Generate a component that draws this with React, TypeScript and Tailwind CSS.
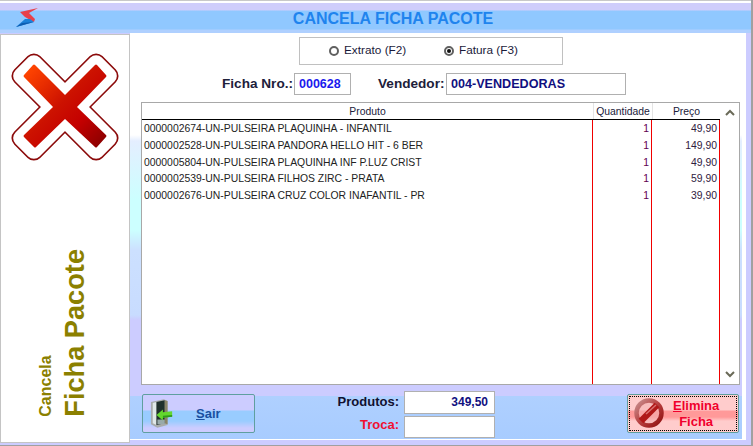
const rows = [
  { name: "0000002674-UN-PULSEIRA PLAQUINHA - INFANTIL", qty: "1", price: "49,90" },
  { name: "0000002528-UN-PULSEIRA PANDORA HELLO HIT - 6 BER", qty: "1", price: "149,90" },
  { name: "0000005804-UN-PULSEIRA PLAQUINHA INF P.LUZ CRIST", qty: "1", price: "49,90" },
  { name: "0000002539-UN-PULSEIRA FILHOS ZIRC - PRATA", qty: "1", price: "59,90" },
  { name: "0000002676-UN-PULSEIRA CRUZ COLOR INAFANTIL - PR", qty: "1", price: "39,90" },
]

function Logo() {
  return (
    <svg width="26" height="22" viewBox="0 0 26 22" className="ml-[14px] mt-[2px]">
      <polygon points="6,4 24,0 15,5 21,11 20,14 11,9" fill="#e8404a" />
      <polygon points="20,14 2,19 11,11 16,11" fill="#1a80d8" />
      <polygon points="20,14 2,19 8,15" fill="#0c5cb0" />
    </svg>
  )
}

function BigX() {
  return (
    <svg width="112" height="114" viewBox="9 50 112 114">
      <defs>
        <linearGradient id="xg" gradientUnits="userSpaceOnUse" x1="28" y1="70" x2="102" y2="144">
          <stop offset="0" stopColor="#ff4400" />
          <stop offset="0.45" stopColor="#cc1100" />
          <stop offset="0.7" stopColor="#c40000" />
          <stop offset="1" stopColor="#8c0000" />
        </linearGradient>
      </defs>
      <g transform="translate(65 107)">
        <rect x="-62.5" y="-18.5" width="125" height="37" rx="9" fill="#8b0a0a" transform="rotate(45)" />
        <rect x="-62.5" y="-18.5" width="125" height="37" rx="9" fill="#8b0a0a" transform="rotate(-45)" />
        <rect x="-61" y="-17" width="122" height="34" rx="8" fill="#fff" transform="rotate(45)" />
        <rect x="-61" y="-17" width="122" height="34" rx="8" fill="#fff" transform="rotate(-45)" />
      </g>
      <path
        d="M35 65 L65 95 L95 65 Q96 64 97 65 L106 75 Q107 76 106 77 L77 107 L106 135 Q107 136 106 137 L97 147 Q96 148 95 147 L65 119 L36 147 Q35 148 34 147 L24 137 Q23 136 24 135 L53 107 L24 77 Q23 76 24 75 L33 65 Q34 64 35 65 Z"
        fill="url(#xg)"
      />
    </svg>
  )
}

function DoorIcon() {
  return (
    <svg width="24" height="32" viewBox="0 0 26 32">
      <polygon points="1,3 15,0 19,2 19,28 8,31 1,27" fill="#a8acac" />
      <polygon points="3,4 7,3 7,28 3,26" fill="#dfe8e8" />
      <polygon points="7,3 16,1 16,26 7,28" fill="#20302c" />
      <polygon points="16,1 19,2 19,27 16,26" fill="#8a8468" />
      <rect x="8" y="22" width="8" height="5" fill="#9aa" />
      <polygon points="7,17 14,11 14,14 24,13 24,19 14,20 14,23" fill="#63d82e" />
      <polygon points="14,20 24,19 24,17 14,18" fill="#2f9a1c" />
    </svg>
  )
}

function NoIcon() {
  return (
    <svg width="30" height="30" viewBox="0 0 30 30" className="mb-[2px]">
      <defs>
        <linearGradient id="ng" x1="0" y1="0" x2="1" y2="1">
          <stop offset="0" stopColor="#c89090" />
          <stop offset="0.5" stopColor="#b84040" />
          <stop offset="1" stopColor="#901010" />
        </linearGradient>
      </defs>
      <circle cx="15" cy="15" r="12.5" fill="#f2b0b0" fillOpacity="0.55" stroke="url(#ng)" strokeWidth="4.5" />
      <line x1="7" y1="23" x2="23" y2="7" stroke="#b01818" strokeWidth="6.5" />
      <line x1="12" y1="16" x2="22" y2="7" stroke="#d87070" strokeWidth="1.5" />
    </svg>
  )
}

function Radio({ checked, label }: { checked?: boolean; label: string }) {
  return (
    <div className="flex items-center gap-[5px]">
      <span className="flex h-[10px] w-[10px] items-center justify-center rounded-full border-2 border-[#606060] bg-white">
        {checked && <span className="h-[4px] w-[4px] rounded-full bg-[#111]" />}
      </span>
      <span className="text-[11.8px] text-[#1a1a3a]">{label}</span>
    </div>
  )
}

export default function App() {
  return (
    <div className="flex h-[446px] w-[753px] flex-col overflow-hidden border-r-2 border-b border-[#a0a0a0] bg-[#ccccff] font-['Liberation_Sans',Arial,sans-serif]">
      <div className="h-[3px] shrink-0 border-t border-[#c8c8c8] bg-white" />
      <div className="relative flex h-[30px] shrink-0 items-center bg-[linear-gradient(#cfcdfb_0,#cfcdfb_7px,#90c8ff_8px,#90c8ff_26px,#afd0ff_27px)]">
        <Logo />
        <div className="absolute inset-x-0 top-[7px] pl-[35px] text-center text-[16px] leading-[18px] font-bold text-[#1f84ee]">
          CANCELA FICHA PACOTE
        </div>
      </div>
      <div className="flex min-h-0 flex-1">
        <div className="mt-[1px] mb-[2px] flex w-[130px] shrink-0 flex-col border border-[#c4c4c4] bg-white">
          <div className="ml-[8px] mt-[15px]">
            <BigX />
          </div>
          <div className="mt-auto mb-[25px] ml-[36px] flex rotate-180 flex-col items-start gap-[5px] self-start font-bold text-[#8b8000] [writing-mode:vertical-rl]">
            <span className="w-[18px] text-[16px] leading-[18px]">Cancela</span>
            <span className="w-[30px] text-[27.2px] leading-[30px] whitespace-nowrap">Ficha Pacote</span>
          </div>
        </div>
        <div className="mb-[5px] flex w-[616px] shrink-0 border-b border-white">
          <main className="flex h-[406px] w-[612px] flex-col bg-[linear-gradient(#fff_0,#fff_102px,#e4eeff_108px,#ccffff_167px,#ccffff_197px,#cce0ff_217px,#c8dcff_282px,#ccccff_287px,#ccccff_363px,#afd0ff_363px,#a8ccff_406px)]">
            <div className="ml-[169px] mt-[4px] flex h-[28px] w-[264px] items-center border border-[#c0c0c0] bg-white pl-[29px]">
              <div className="w-[115px]">
                <Radio label="Extrato (F2)" />
              </div>
              <Radio checked label="Fatura (F3)" />
            </div>
            <div className="mt-[8px] flex h-[22px] items-center">
              <span className="ml-[92px] w-[72px] text-[13.6px] font-bold whitespace-nowrap text-[#20203a]">Ficha Nro.:</span>
              <div className="flex h-[22px] w-[57px] items-center border border-[#b0b0b0] bg-white pl-[4px] text-[12.5px] font-bold text-[#1a1aee]">
                000628
              </div>
              <span className="ml-[27px] w-[68px] text-[13.6px] font-bold whitespace-nowrap text-[#20203a]">Vendedor:</span>
              <div className="flex h-[22px] w-[180px] items-center border border-[#b0b0b0] bg-white pl-[4px] text-[12.6px] font-bold text-[#101080]">
                004-VENDEDORAS
              </div>
            </div>
            <div className="ml-[11px] mt-[7px] flex h-[283px] w-[599px] border border-[#a8a8a8] bg-white">
              <div className="flex w-[578px] flex-col border-r border-[#f00000]">
                <div className="-mr-px flex h-[17px] shrink-0 border-b border-black bg-white text-[10.4px] leading-[17px] text-[#20203a]">
                  <div className="w-[451px] text-center">Produto</div>
                  <div className="w-[59px] border-l border-[#e4e4e4] text-center whitespace-nowrap">Quantidade</div>
                  <div className="w-[68px] border-l border-[#e4e4e4] text-center">Preço</div>
                </div>
                <div className="flex flex-1">
                  <div className="w-[451px] border-r border-[#f00000] pl-[2px] pt-[1px] text-[10.4px] leading-[16.8px] whitespace-nowrap text-[#222]">
                    {rows.map((r) => (
                      <div key={r.name}>{r.name}</div>
                    ))}
                  </div>
                  <div className="w-[59px] border-r border-[#f00000] pr-[2px] pt-[1px] text-right text-[10.4px] leading-[16.8px] text-[#600050]">
                    {rows.map((r) => (
                      <div key={r.name}>{r.qty}</div>
                    ))}
                  </div>
                  <div className="flex-1 pr-[2px] pt-[1px] text-right text-[10.4px] leading-[16.8px] text-[#302040]">
                    {rows.map((r) => (
                      <div key={r.name}>{r.price}</div>
                    ))}
                  </div>
                </div>
              </div>
              <div className="flex flex-1 flex-col items-center justify-between py-[6px] text-[#6a6a58]">
                <svg width="10" height="7" viewBox="0 0 10 7">
                  <path d="M1 6 L5 2 L9 6" fill="none" stroke="currentColor" strokeWidth="2" />
                </svg>
                <svg width="10" height="7" viewBox="0 0 10 7">
                  <path d="M1 1 L5 5 L9 1" fill="none" stroke="currentColor" strokeWidth="2" />
                </svg>
              </div>
            </div>
            <div className="mt-[6px] flex h-[47px]">
              <div className="ml-[12px] mt-[3px] flex h-[39px] w-[113px] items-center rounded-[2px] border border-[#5f9f9f] bg-[linear-gradient(#ccccff_0,#ccccff_15px,#99ccff_16px,#99ccff_26px,#ccccff_33px)] pl-[7px]">
                <DoorIcon />
                <span className="ml-[22px] text-[13px] font-bold text-[#1a50a0]">
                  <span className="underline">S</span>air
                </span>
              </div>
              <div className="ml-[81px] flex w-[63px] flex-col items-end text-[13px] font-bold">
                <span className="mt-[3px] h-[23px] leading-[16px] text-[#111130]">Produtos:</span>
                <span className="leading-[16px] text-[#f01030]">Troca:</span>
              </div>
              <div className="ml-[5px] flex w-[91px] flex-col gap-[2px]">
                <div className="flex h-[23px] items-center justify-end border border-[#b0b0b0] bg-white pr-[6px] text-[12px] font-bold text-[#101080]">
                  349,50
                </div>
                <div className="h-[23px] border border-[#b0b0b0] bg-white" />
              </div>
              <div className="ml-[132px] mt-[3px] flex h-[39px] w-[112px] rounded-[2px] border border-[#5f9f9f] bg-[linear-gradient(#ffcccc_0,#ffcccc_15px,#ff9999_16px,#ff9999_22px,#ffcccc_26px)] p-[1px]">
                <div className="flex flex-1 items-center border border-dotted border-black pl-[4px]">
                  <NoIcon />
                  <div className="ml-[9px] text-center text-[13px] leading-[16px] font-bold text-[#f0002c]">
                    <span className="underline">E</span>limina
                    <br />
                    Ficha
                  </div>
                </div>
              </div>
            </div>
          </main>
          <div className="h-[406px] w-[4px] bg-white" />
        </div>
      </div>
    </div>
  )
}
